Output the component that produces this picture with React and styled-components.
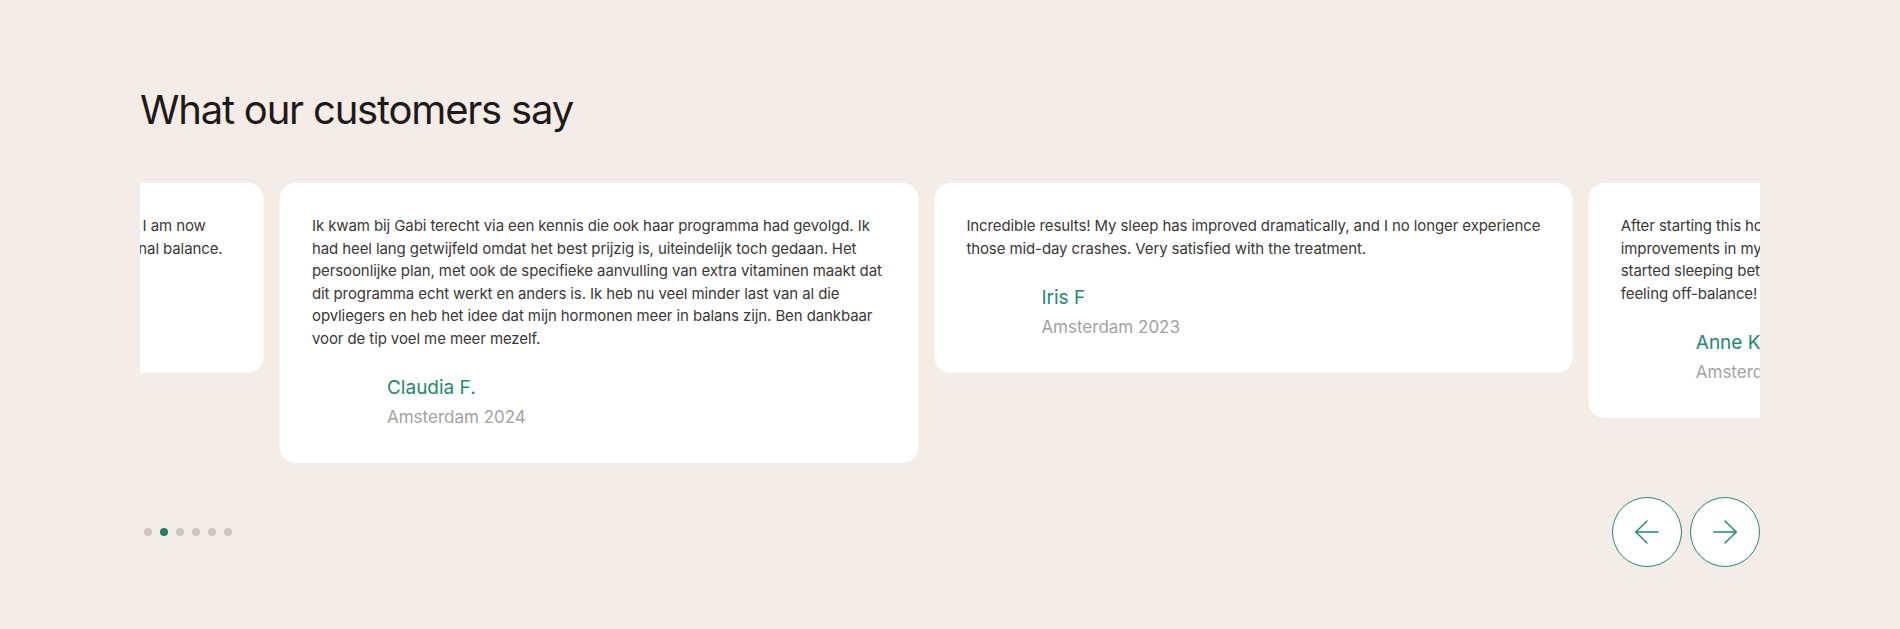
import React from 'react'
import styled, { createGlobalStyle } from 'styled-components'

const GlobalStyle = createGlobalStyle`
  body {
    margin: 0;
    background: #f4ece7;
    font-family: Inter, "Liberation Sans", sans-serif;
  }
`

const Section = styled.section`
  width: 1900px;
  box-sizing: border-box;
  padding: 86px 140px 60px;
  background: #f4ece7;
`

const Heading = styled.h2`
  margin: 0 0 49px;
  font-size: 40px;
  line-height: 48px;
  font-weight: 400;
  color: #1f1a17;
  letter-spacing: -1.2px;
`

const Viewport = styled.div`
  width: 1620px;
  overflow: hidden;
`

const Track = styled.div`
  display: flex;
  align-items: flex-start;
  gap: 16px;
  transform: translateX(${p => p.$offset}px);
`

const Card = styled.div`
  flex: 0 0 638.4px;
  box-sizing: border-box;
  padding: 32px 24px 32px 32px;
  background: #fff;
  border-radius: 16px;
`

const Quote = styled.p`
  margin: 0;
  font-size: 15px;
  line-height: 22.5px;
  letter-spacing: -0.1px;
  color: #3b3836;
`

const Author = styled.div`
  display: flex;
  gap: 16px;
  margin-top: 23px;
`

const Avatar = styled.div`
  width: 59px;
  flex: 0 0 59px;
`

const Name = styled.div`
  font-size: 19px;
  line-height: 30px;
  color: #1d8a6e;
`

const Place = styled.div`
  font-size: 17px;
  line-height: 28px;
  color: #a5a2a0;
`

const Controls = styled.div`
  display: flex;
  justify-content: space-between;
  align-items: center;
  margin-top: 34px;
`

const Dots = styled.div`
  display: flex;
`

const Dot = styled.span`
  width: 8px;
  height: 8px;
  margin: 0 4px;
  border-radius: 50%;
  background: ${p => (p.$active ? '#16826a' : '#cbc4c0')};
`

const Buttons = styled.div`
  display: flex;
  gap: 8px;
`

const NavButton = styled.button`
  width: 70px;
  height: 70px;
  padding: 0;
  border-radius: 50%;
  border: 1px solid #1d8a6e;
  background: #fff;
  display: flex;
  align-items: center;
  justify-content: center;
  cursor: pointer;
`

const reviews = [
  {
    text: 'Since joining this program my hot flashes and night sweats are gone. I am now sleeping well again, I feel energetic and have finally found my emotional balance.',
    name: 'Marieke D.',
    place: 'Utrecht 2024',
  },
  {
    text: 'Ik kwam bij Gabi terecht via een kennis die ook haar programma had gevolgd. Ik had heel lang getwijfeld omdat het best prijzig is, uiteindelijk toch gedaan. Het persoonlijke plan, met ook de specifieke aanvulling van extra vitaminen maakt dat dit programma echt werkt en anders is. Ik heb nu veel minder last van al die opvliegers en heb het idee dat mijn hormonen meer in balans zijn. Ben dankbaar voor de tip voel me meer mezelf.',
    name: 'Claudia F.',
    place: 'Amsterdam 2024',
  },
  {
    text: 'Incredible results! My sleep has improved dramatically, and I no longer experience those mid-day crashes. Very satisfied with the treatment.',
    name: 'Iris F',
    place: 'Amsterdam 2023',
  },
  {
    text: 'After starting this hormone treatment, I quickly noticed significant and lasting improvements in my energy levels and in my overall mood. Within two weeks, I also started sleeping better, my hot flashes have faded away and I no longer wake up feeling off-balance!',
    name: 'Anne K.',
    place: 'Amsterdam 2023',
  },
]

const Arrow = ({ dir }) => (
  <svg width="38" height="38" viewBox="0 0 24 24" fill="none" stroke="#1d8a6e" strokeWidth="0.9" strokeLinecap="round" strokeLinejoin="round">
    {dir === 'left' ? (
      <>
        <path d="M19 12H5" />
        <path d="M12 19l-7-7 7-7" />
      </>
    ) : (
      <>
        <path d="M5 12h14" />
        <path d="M12 5l7 7-7 7" />
      </>
    )}
  </svg>
)

export default function App() {
  return (
    <>
      <GlobalStyle />
      <Section>
        <Heading>What our customers say</Heading>
        <Viewport>
          <Track $offset={-514.4}>
            {reviews.map(r => (
              <Card key={r.name}>
                <Quote>{r.text}</Quote>
                <Author>
                  <Avatar />
                  <div>
                    <Name>{r.name}</Name>
                    <Place>{r.place}</Place>
                  </div>
                </Author>
              </Card>
            ))}
          </Track>
        </Viewport>
        <Controls>
          <Dots>
            {[0, 1, 2, 3, 4, 5].map(i => (
              <Dot key={i} $active={i === 1} />
            ))}
          </Dots>
          <Buttons>
            <NavButton aria-label="Previous">
              <Arrow dir="left" />
            </NavButton>
            <NavButton aria-label="Next">
              <Arrow dir="right" />
            </NavButton>
          </Buttons>
        </Controls>
      </Section>
    </>
  )
}
